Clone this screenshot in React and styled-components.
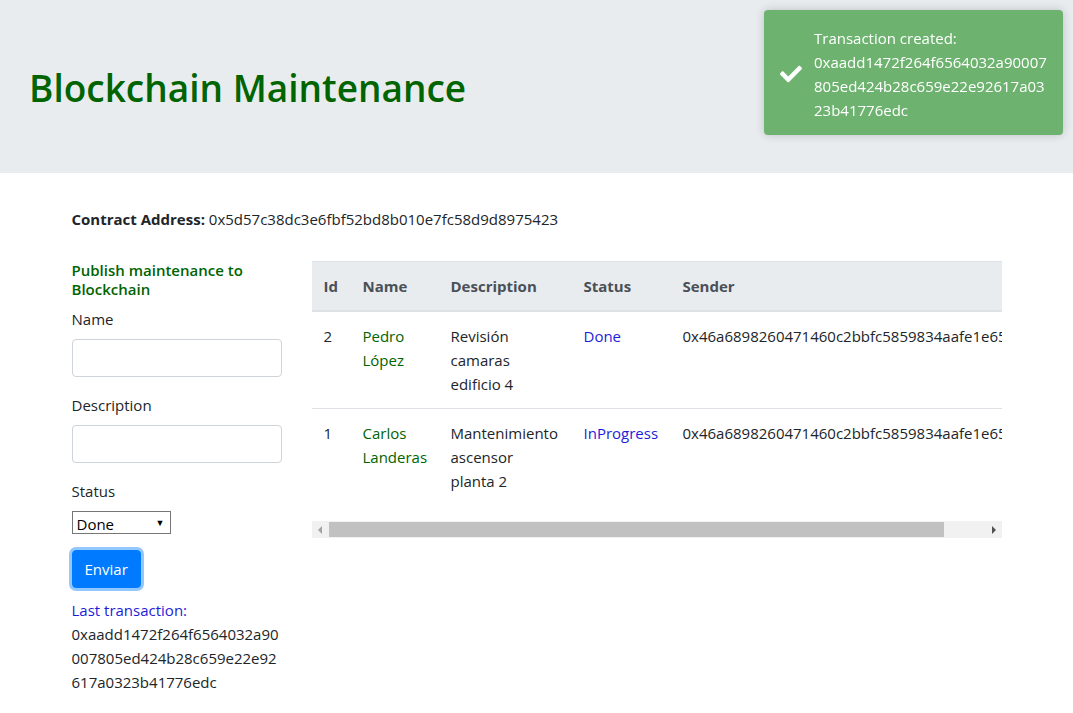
import React from "react";
import styled, { createGlobalStyle } from "styled-components";
import { FaCheck } from "react-icons/fa";

const GlobalStyle = createGlobalStyle`
  body {
    margin: 0;
    font-family: "Open Sans", "Noto Sans", sans-serif;
    font-size: 15px;
    line-height: 24px;
    color: #212529;
    background: #fff;
  }
  * { box-sizing: border-box; }
`;

const Jumbotron = styled.header`
  background-color: #e9ecef;
  padding: 64px 29px 61px;
`;

const Title = styled.h1`
  margin: 0;
  font-size: 37px;
  font-weight: 600;
  line-height: 48px;
  color: darkgreen;
`;

const Toast = styled.div`
  position: fixed;
  top: 10px;
  right: 10px;
  width: 299px;
  display: flex;
  align-items: center;
  gap: 11px;
  padding: 16px 14px 13px 15px;
  background-color: #6db36f;
  color: #fff;
  border-radius: 4px;
  box-shadow: 0 0 10px rgba(0, 0, 0, 0.18);
`;

const ToastIcon = styled.div`
  flex: 0 0 24px;
  display: flex;
  justify-content: center;
  font-size: 22px;
`;

const ToastText = styled.div`
  word-break: break-all;
  line-height: 24px;
`;

const ToastHeading = styled.div`
  word-break: normal;
`;

const Container = styled.main`
  width: 960px;
  margin: 34px auto 0;
  padding: 0 15px;
`;

const ContractLine = styled.p`
  margin: 0 0 30px;
  b { font-weight: 700; }
`;

const Row = styled.div`
  display: flex;
  gap: 30px;
`;

const Sidebar = styled.aside`
  flex: 0 0 210px;
`;

const FormTitle = styled.h6`
  margin: 0 0 8px;
  font-size: 15px;
  font-weight: 600;
  line-height: 19px;
  color: darkgreen;
`;

const FormGroup = styled.div`
  margin-bottom: 16px;
`;

const Label = styled.label`
  display: block;
  margin-bottom: 8px;
`;

const Input = styled.input`
  display: block;
  width: 100%;
  height: 38px;
  padding: 6px 12px;
  font: inherit;
  border: 1px solid #ced4da;
  border-radius: 4px;
  background: #fff;
`;

const SelectWrap = styled.div`
  position: relative;
  width: 99px;
  height: 23px;
  margin-top: 2px;
`;

const Select = styled.select`
  appearance: none;
  width: 100%;
  height: 100%;
  padding: 0 0 0 4px;
  font: inherit;
  font-size: 15px;
  color: #000;
  background: #fff;
  border: 1px solid #767676;
  border-radius: 0;
`;

const SelectArrow = styled.span`
  position: absolute;
  right: 6px;
  top: 0;
  font-size: 9px;
  color: #000;
  pointer-events: none;
`;

const Button = styled.button`
  display: inline-block;
  padding: 6px 12px;
  font: inherit;
  line-height: 24px;
  color: #fff;
  background-color: #007bff;
  border: 1px solid #007bff;
  border-radius: 4px;
  box-shadow: 0 0 0 3px rgba(38, 143, 255, 0.5);
`;

const LastTx = styled.p`
  margin: 10px 0 0;
  word-break: break-all;
`;

const Blue = styled.span`
  display: block;
  color: #1d1dd8;
`;

const TableArea = styled.div`
  flex: 0 0 690px;
  width: 690px;
`;

const TableClip = styled.div`
  overflow: hidden;
`;

const Table = styled.table`
  width: 736px;
  table-layout: fixed;
  border-collapse: collapse;
  margin-bottom: 16px;
`;

const Th = styled.th`
  width: ${(p) => p.w}px;
  padding: 12px;
  text-align: left;
  vertical-align: bottom;
  font-weight: 700;
  color: #495057;
  background-color: #e9ecef;
  border-top: 1px solid #dee2e6;
  border-bottom: 2px solid #dee2e6;
  white-space: nowrap;
`;

const Td = styled.td`
  padding: 12px;
  vertical-align: top;
  border-top: 1px solid #dee2e6;
  color: ${(p) => p.color || "#212529"};
  white-space: ${(p) => (p.nowrap ? "nowrap" : "normal")};
`;

const ScrollBar = styled.div`
  display: flex;
  height: 17px;
  background: #f1f1f1;
`;

const ScrollArrow = styled.div`
  flex: 0 0 16px;
  display: flex;
  align-items: center;
  justify-content: center;
  svg { display: block; }
`;

const ScrollTrack = styled.div`
  flex: 1;
  display: flex;
  align-items: center;
  padding: 0 1px;
`;

const Thumb = styled.div`
  width: ${(p) => p.ratio * 100}%;
  height: 15px;
  background: #c1c1c1;
`;

const columns = [
  { label: "Id", w: 39 },
  { label: "Name", w: 88 },
  { label: "Description", w: 133 },
  { label: "Status", w: 99 },
  { label: "Sender", w: 377 },
];

const rows = [
  {
    id: 2,
    name: "Pedro López",
    description: "Revisión camaras edificio 4",
    status: "Done",
    sender: "0x46a6898260471460c2bbfc5859834aafe1e65b2c",
  },
  {
    id: 1,
    name: "Carlos Landeras",
    description: "Mantenimiento ascensor planta 2",
    status: "InProgress",
    sender: "0x46a6898260471460c2bbfc5859834aafe1e65b2c",
  },
];

const TX = "0xaadd1472f264f6564032a90007805ed424b28c659e22e92617a0323b41776edc";

function App() {
  return (
    <>
      <GlobalStyle />
      <Jumbotron>
        <Title>Blockchain Maintenance</Title>
      </Jumbotron>

      <Toast>
        <ToastIcon>
          <FaCheck />
        </ToastIcon>
        <ToastText>
          <ToastHeading>Transaction created:</ToastHeading>
          {TX}
        </ToastText>
      </Toast>

      <Container>
        <ContractLine>
          <b>Contract Address:</b> 0x5d57c38dc3e6fbf52bd8b010e7fc58d9d8975423
        </ContractLine>

        <Row>
          <Sidebar>
            <FormTitle>Publish maintenance to Blockchain</FormTitle>
            <FormGroup>
              <Label>Name</Label>
              <Input type="text" />
            </FormGroup>
            <FormGroup>
              <Label>Description</Label>
              <Input type="text" />
            </FormGroup>
            <FormGroup>
              <Label>Status</Label>
              <SelectWrap>
                <Select defaultValue="Done">
                  <option>Done</option>
                  <option>InProgress</option>
                </Select>
                <SelectArrow>▼</SelectArrow>
              </SelectWrap>
            </FormGroup>
            <Button>Enviar</Button>
            <LastTx>
              <Blue>Last transaction:</Blue>
              {TX}
            </LastTx>
          </Sidebar>

          <TableArea>
            <TableClip>
              <Table>
                <thead>
                  <tr>
                    {columns.map((c) => (
                      <Th key={c.label} w={c.w}>
                        {c.label}
                      </Th>
                    ))}
                  </tr>
                </thead>
                <tbody>
                  {rows.map((r) => (
                    <tr key={r.id}>
                      <Td>{r.id}</Td>
                      <Td color="darkgreen">{r.name}</Td>
                      <Td>{r.description}</Td>
                      <Td color="#1d1dd8">{r.status}</Td>
                      <Td nowrap>{r.sender}</Td>
                    </tr>
                  ))}
                </tbody>
              </Table>
            </TableClip>
            <ScrollBar>
              <ScrollArrow>
                <svg width="4" height="8" viewBox="0 0 4 8">
                  <path d="M4 0 L0 4 L4 8 Z" fill="#a3a3a3" />
                </svg>
              </ScrollArrow>
              <ScrollTrack>
                <Thumb ratio={0.938} />
              </ScrollTrack>
              <ScrollArrow>
                <svg width="4" height="8" viewBox="0 0 4 8">
                  <path d="M0 0 L4 4 L0 8 Z" fill="#505050" />
                </svg>
              </ScrollArrow>
            </ScrollBar>
          </TableArea>
        </Row>
      </Container>
    </>
  );
}

export default App;
